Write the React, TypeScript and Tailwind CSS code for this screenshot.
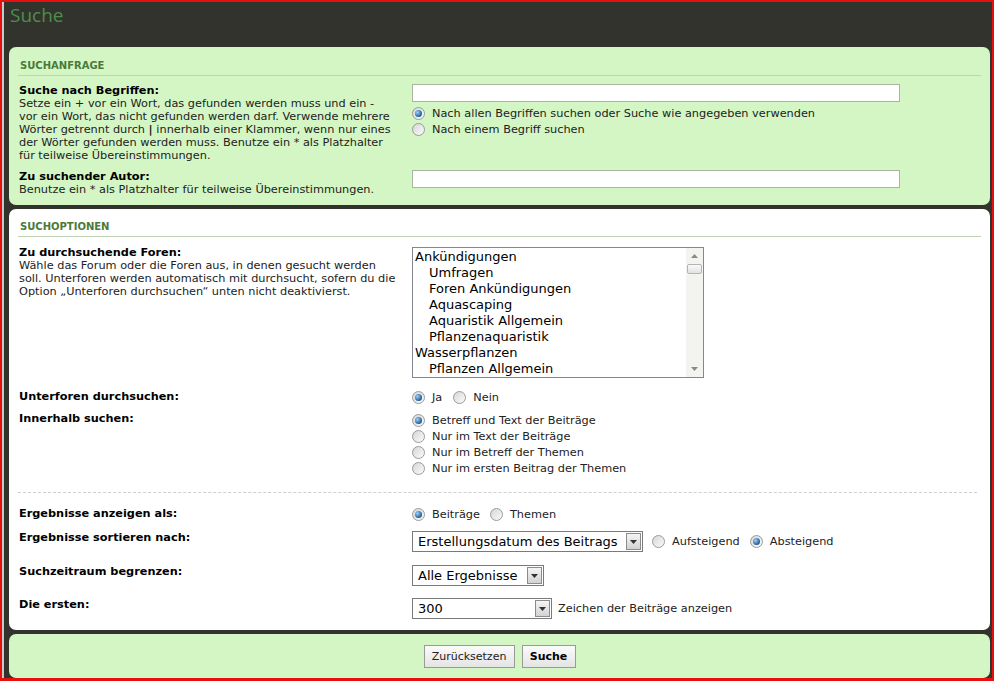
import React from "react"

function Radio({ checked }: { checked?: boolean }) {
  return (
    <span className="inline-flex h-[13px] w-[13px] shrink-0 items-center justify-center rounded-full border border-[#9a9a9a] bg-gradient-to-br from-[#d6d6d6] to-[#fbfbfb]">
      {checked && (
        <span className="h-[7px] w-[7px] rounded-full bg-[radial-gradient(circle_at_35%_35%,#9fd0f5,#1c5d99_70%)]" />
      )}
    </span>
  )
}

function RadioOption({ checked, label, className = "" }: { checked?: boolean; label: string; className?: string }) {
  return (
    <label className={`flex h-[16px] items-center ${className}`}>
      <Radio checked={checked} />
      <span className="ml-[7px]">{label}</span>
    </label>
  )
}

function Select({ value, className }: { value: string; className: string }) {
  return (
    <div className={`flex h-[21px] items-center border border-[#7a7a7a] bg-white ${className}`}>
      <span className="flex-1 pl-[5px] text-[13px] leading-none text-black">{value}</span>
      <span className="mr-[1px] flex h-[17px] w-[15px] items-center justify-center border border-[#8c8c8c] bg-gradient-to-b from-[#f5f5f5] to-[#d2d2d2]">
        <svg width="7" height="4" viewBox="0 0 7 4">
          <path d="M0 0h7L3.5 4z" fill="#333" />
        </svg>
      </span>
    </div>
  )
}

function Row({
  label,
  desc,
  children,
  className = "",
}: {
  label: string
  desc?: React.ReactNode
  children: React.ReactNode
  className?: string
}) {
  return (
    <div className={`flex pl-[1px] ${className}`}>
      <div className="w-[393px] shrink-0 whitespace-nowrap">
        <div className="font-bold text-black">{label}</div>
        {desc && <div>{desc}</div>}
      </div>
      <div className="flex-1">{children}</div>
    </div>
  )
}

function Heading({ children }: { children: string }) {
  return (
    <div className="border-b border-[#bfd4b5] pb-[3px] pl-[2px] text-[10px] font-bold leading-[12px] text-[#4a7a3a]">
      {children}
    </div>
  )
}

const forums = [
  { name: "Ankündigungen", sub: false },
  { name: "Umfragen", sub: true },
  { name: "Foren Ankündigungen", sub: true },
  { name: "Aquascaping", sub: true },
  { name: "Aquaristik Allgemein", sub: true },
  { name: "Pflanzenaquaristik", sub: true },
  { name: "Wasserpflanzen", sub: false },
  { name: "Pflanzen Allgemein", sub: true },
]

export default function App() {
  return (
    <div className="h-[681px] w-full overflow-hidden border-x-2 border-t-2 border-b-[3px] border-[#e8100f] bg-[#33332d] font-['DejaVu_Sans',Verdana,sans-serif] text-[11.3px] leading-[13px] text-[#222]">
      <div className="flex h-full flex-col border-l-2 border-[#c9c9c9]">
        {/* Title */}
        <div className="h-[45px] pl-[6px] font-['Open_Sans',sans-serif] text-[19px] leading-[26px] text-[#4f8c4d]">
          Suche
        </div>

        <div className="ml-[5px] mr-[2px] flex flex-col gap-[4px]">
          {/* Suchanfrage */}
          <div className="h-[158px] rounded-[7px] bg-[#d4f6c4] px-[9px] pt-[13px]">
            <Heading>SUCHANFRAGE</Heading>
            <Row
              className="mt-[8px]"
              label="Suche nach Begriffen:"
              desc={
                <>
                  Setze ein + vor ein Wort, das gefunden werden muss und ein -<br />
                  vor ein Wort, das nicht gefunden werden darf. Verwende mehrere
                  <br />
                  Wörter getrennt durch <b>|</b> innerhalb einer Klammer, wenn nur eines
                  <br />
                  der Wörter gefunden werden muss. Benutze ein * als Platzhalter
                  <br />
                  für teilweise Übereinstimmungen.
                </>
              }
            >
              <input className="h-[18px] w-[488px] border border-[#a9b5a0] bg-white outline-none" />
              <div className="mt-[3px]">
                <RadioOption checked label="Nach allen Begriffen suchen oder Suche wie angegeben verwenden" />
                <RadioOption label="Nach einem Begriff suchen" />
              </div>
            </Row>
            <Row
              className="mt-[8px]"
              label="Zu suchender Autor:"
              desc="Benutze ein * als Platzhalter für teilweise Übereinstimmungen."
            >
              <input className="h-[18px] w-[488px] border border-[#a9b5a0] bg-white outline-none" />
            </Row>
          </div>

          {/* Suchoptionen */}
          <div className="h-[421px] rounded-[7px] bg-white px-[9px] pt-[12px]">
            <Heading>SUCHOPTIONEN</Heading>
            <Row
              className="mt-[9px]"
              label="Zu durchsuchende Foren:"
              desc={
                <>
                  Wähle das Forum oder die Foren aus, in denen gesucht werden
                  <br />
                  soll. Unterforen werden automatisch mit durchsucht, sofern du die
                  <br />
                  Option „Unterforen durchsuchen“ unten nicht deaktivierst.
                </>
              }
            >
              <div className="mt-[1px] flex h-[131px] w-[292px] border border-[#828790] bg-white">
                <ul className="flex-1 pl-[2px] pt-[1px] text-[13px] leading-[16px] text-black">
                  {forums.map((f) => (
                    <li key={f.name} className={f.sub ? "pl-[14px]" : ""}>
                      {f.name}
                    </li>
                  ))}
                </ul>
                <div className="flex w-[17px] flex-col bg-[#f3f3f0]">
                  <div className="flex h-[16px] items-center justify-center">
                    <svg width="7" height="4" viewBox="0 0 7 4">
                      <path d="M0 4h7L3.5 0z" fill="#8a8a8a" />
                    </svg>
                  </div>
                  <div className="mx-[1px] h-[10px] rounded-[2px] border border-[#b4b4b4] bg-gradient-to-b from-[#fafafa] to-[#e2e2e2]" />
                  <div className="flex-1" />
                  <div className="flex h-[16px] items-center justify-center">
                    <svg width="7" height="4" viewBox="0 0 7 4">
                      <path d="M0 0h7L3.5 4z" fill="#8a8a8a" />
                    </svg>
                  </div>
                </div>
              </div>
            </Row>

            <Row className="mt-[12px]" label="Unterforen durchsuchen:">
              <div className="-mt-[1px] flex">
                <RadioOption checked label="Ja" />
                <RadioOption className="ml-[11px]" label="Nein" />
              </div>
            </Row>

            <Row className="mt-[7px]" label="Innerhalb suchen:">
              <div>
                <RadioOption checked label="Betreff und Text der Beiträge" />
                <RadioOption label="Nur im Text der Beiträge" />
                <RadioOption label="Nur im Betreff der Themen" />
                <RadioOption label="Nur im ersten Beitrag der Themen" />
              </div>
            </Row>

            <div className="mr-[4px] mt-[16px] border-t border-dashed border-[#cfcfcf]" />

            <Row className="mt-[14px]" label="Ergebnisse anzeigen als:">
              <div className="-mt-[1px] flex">
                <RadioOption checked label="Beiträge" />
                <RadioOption className="ml-[10px]" label="Themen" />
              </div>
            </Row>

            <Row className="mt-[9px]" label="Ergebnisse sortieren nach:">
              <div className="flex items-center">
                <Select value="Erstellungsdatum des Beitrags" className="w-[231px]" />
                <RadioOption className="ml-[9px]" label="Aufsteigend" />
                <RadioOption checked className="ml-[10px]" label="Absteigend" />
              </div>
            </Row>

            <Row className="mt-[13px]" label="Suchzeitraum begrenzen:">
              <Select value="Alle Ergebnisse" className="w-[132px]" />
            </Row>

            <Row className="mt-[12px]" label="Die ersten:">
              <div className="flex items-center">
                <Select value="300" className="w-[140px]" />
                <span className="ml-[6px]">Zeichen der Beiträge anzeigen</span>
              </div>
            </Row>
          </div>

          {/* Buttons */}
          <div className="flex h-[44px] items-center justify-center gap-[7px] rounded-[7px] bg-[#d4f6c4]">
            <button className="h-[23px] w-[91px] border border-[#9a9a9a] bg-gradient-to-b from-[#fbfbfb] to-[#e4e4e4] text-[11px] text-[#222]">
              Zurücksetzen
            </button>
            <button className="h-[23px] w-[54px] border border-[#9a9a9a] bg-gradient-to-b from-[#fbfbfb] to-[#e4e4e4] text-[11px] font-bold text-black">
              Suche
            </button>
          </div>
        </div>
      </div>
    </div>
  )
}
